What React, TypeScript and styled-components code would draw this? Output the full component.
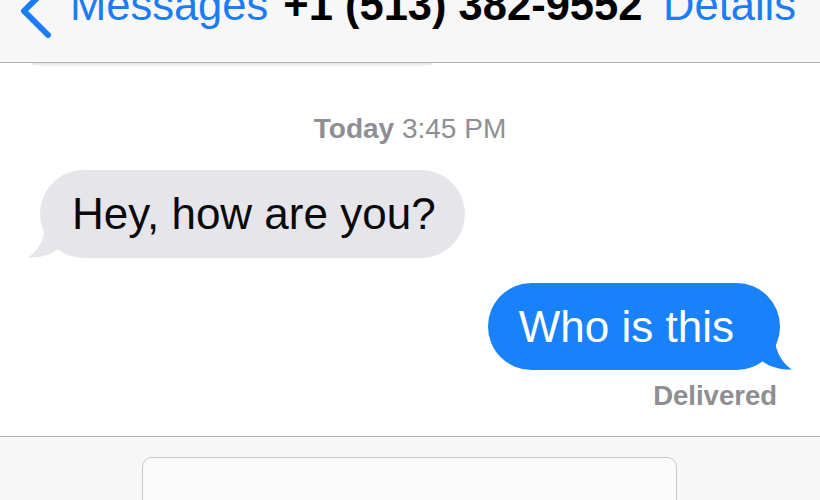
import styled, { createGlobalStyle } from "styled-components";

const GlobalStyle = createGlobalStyle`
  html, body {
    margin: 0;
    padding: 0;
    background: #ffffff;
  }
  body {
    font-family: "Liberation Sans", Helvetica, Arial, sans-serif;
  }
`;

type Side = "in" | "out";

const messages: { id: number; side: Side; text: string }[] = [
  { id: 1, side: "in", text: "Hey, how are you?" },
  { id: 2, side: "out", text: "Who is this" },
];

function Chevron() {
  return (
    <svg width="36" height="56" viewBox="0 0 36 56">
      <polyline
        points="30,4 6,28 30,52"
        fill="none"
        stroke="#1c7cf4"
        strokeWidth="6"
        strokeLinecap="round"
        strokeLinejoin="round"
      />
    </svg>
  );
}

function Tail({ side }: { side: Side }) {
  const fill = side === "in" ? "#e5e5ea" : "#1982fb";
  return (
    <TailSvg $side={side} width="34" height="40" viewBox="0 0 34 40">
      {side === "in" ? (
        <path d="M18 0 C18 18 12 32 0 39.5 C12 40 22 37 30 31 L34 0 Z" fill={fill} />
      ) : (
        <path d="M16 0 C16 18 22 32 34 39.5 C22 40 12 37 4 31 L0 0 Z" fill={fill} />
      )}
    </TailSvg>
  );
}

function App() {
  return (
    <>
      <GlobalStyle />
      <Screen>
        <Header>
          <NavRow>
            <BackLink>
              <Chevron />
              <span>Messages</span>
            </BackLink>
            <Title>+1 (513) 382-9552</Title>
            <NavLink>Details</NavLink>
          </NavRow>
        </Header>
        <Thread>
          <Remnant />
          <Stamp>
            <b>Today</b> 3:45 PM
          </Stamp>
          {messages.map((m) => (
            <Row key={m.id} $side={m.side}>
              <Bubble $side={m.side}>
                {m.text}
                <Tail side={m.side} />
              </Bubble>
            </Row>
          ))}
          <Status>Delivered</Status>
        </Thread>
        <Composer>
          <InputBox />
        </Composer>
      </Screen>
    </>
  );
}

const Screen = styled.div`
  width: 820px;
  height: 500px;
  overflow: hidden;
  display: flex;
  flex-direction: column;
  background: #ffffff;
`;

const Header = styled.header`
  height: 62px;
  flex: none;
  background: #f7f7f8;
  border-bottom: 1px solid #b4b4b8;
  overflow: hidden;
`;

const NavRow = styled.div`
  display: flex;
  align-items: center;
  height: 42px;
  margin-top: -16px;
  padding: 0 24px 0 18px;
  font-size: 43.5px;
  line-height: 42px;
  white-space: nowrap;
`;

const BackLink = styled.div`
  display: flex;
  align-items: center;
  gap: 16px;
  color: #1c7cf4;
  svg {
    margin-top: 12px;
  }
`;

const Title = styled.div`
  margin-left: 15px;
  font-weight: 700;
  color: #000000;
`;

const NavLink = styled.div`
  margin-left: auto;
  color: #1c7cf4;
`;

const Thread = styled.main`
  flex: none;
  height: 373px;
  display: flex;
  flex-direction: column;
`;

const Remnant = styled.div`
  height: 3px;
  width: 400px;
  margin-left: 32px;
  background: linear-gradient(to bottom, #e2e2e6, #f6f6f8);
  border-radius: 0 0 24px 24px;
`;

const Stamp = styled.div`
  margin-top: 48px;
  text-align: center;
  font-size: 28px;
  line-height: 30px;
  color: #8e8e93;
  b {
    font-weight: 700;
  }
`;

const Row = styled.div<{ $side: Side }>`
  display: flex;
  justify-content: ${({ $side }) => ($side === "in" ? "flex-start" : "flex-end")};
  padding: ${({ $side }) => ($side === "in" ? "0 0 0 40px" : "0 40px 0 0")};
  margin-top: ${({ $side }) => ($side === "in" ? "26px" : "25px")};
`;

const Bubble = styled.div<{ $side: Side }>`
  position: relative;
  height: ${({ $side }) => ($side === "in" ? "88px" : "87px")};
  display: flex;
  align-items: center;
  padding: ${({ $side }) => ($side === "in" ? "0 29px 0 32px" : "0 46px 0 31px")};
  border-radius: 44px;
  font-size: 44px;
  background: ${({ $side }) => ($side === "in" ? "#e5e5ea" : "#1982fb")};
  color: ${({ $side }) => ($side === "in" ? "#0a0a0a" : "#ffffff")};
  box-sizing: border-box;
`;

const TailSvg = styled.svg<{ $side: Side }>`
  position: absolute;
  bottom: 0;
  ${({ $side }) => ($side === "in" ? "left: -12px;" : "right: -12px;")}
`;

const Status = styled.div`
  margin-top: 11px;
  align-self: flex-end;
  margin-right: 43px;
  font-size: 27.5px;
  line-height: 30px;
  font-weight: 700;
  color: #8e8e93;
`;

const Composer = styled.footer`
  flex: 1;
  background: #f7f7f8;
  border-top: 1px solid #b4b4b8;
  padding-top: 20px;
  display: flex;
  justify-content: flex-start;
  padding-left: 142px;
`;

const InputBox = styled.div`
  width: 535px;
  height: 80px;
  background: #fafafa;
  border: 1.5px solid #c8c8cd;
  border-radius: 10px;
  box-sizing: border-box;
`;

export default App;
